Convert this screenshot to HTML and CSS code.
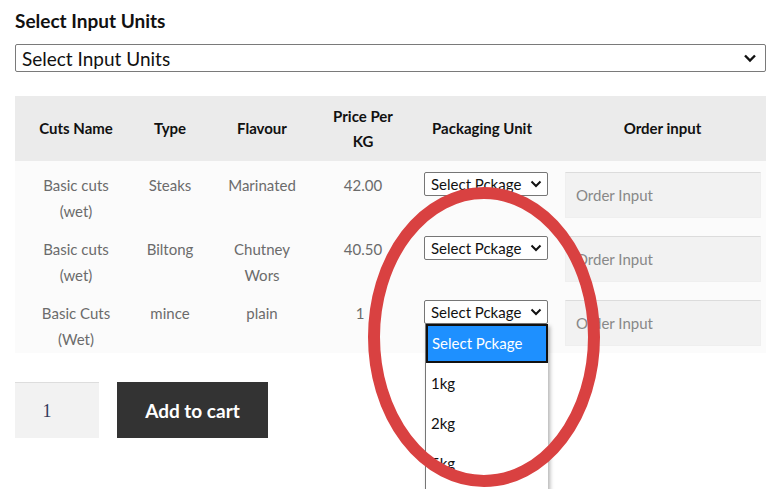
FILE: index.html
```html
<!DOCTYPE html>
<html>
<head>
<meta charset="utf-8">
<link rel="stylesheet" href="styles.css">
</head>
<body>
<div class="page">
  <h3 class="title">Select Input Units</h3>
  <div class="big-select">
    <span>Select Input Units</span>
    <svg class="chev" width="14" height="10" viewBox="0 0 14 10"><path d="M2 2.5 L7 7.5 L12 2.5" fill="none" stroke="#111" stroke-width="2.4"/></svg>
  </div>
  <table class="cuts">
    <colgroup>
      <col class="c1"><col class="c2"><col class="c3"><col class="c4"><col class="c5"><col>
    </colgroup>
    <thead>
      <tr><th>Cuts Name</th><th>Type</th><th>Flavour</th><th>Price Per<br>KG</th><th>Packaging Unit</th><th>Order input</th></tr>
    </thead>
    <tbody>
      <tr>
        <td>Basic cuts<br>(wet)</td><td>Steaks</td><td>Marinated</td><td>42.00</td>
        <td class="pk"><div class="sm-select">Select Pckage<svg width="12" height="8" viewBox="0 0 12 8"><path d="M1.5 1.5 L6 6 L10.5 1.5" fill="none" stroke="#111" stroke-width="2"/></svg></div></td>
        <td class="oi"><div class="order">Order Input</div></td>
      </tr>
      <tr>
        <td>Basic cuts<br>(wet)</td><td>Biltong</td><td>Chutney<br>Wors</td><td>40.50</td>
        <td class="pk"><div class="sm-select">Select Pckage<svg width="12" height="8" viewBox="0 0 12 8"><path d="M1.5 1.5 L6 6 L10.5 1.5" fill="none" stroke="#111" stroke-width="2"/></svg></div></td>
        <td class="oi"><div class="order">Order Input</div></td>
      </tr>
      <tr>
        <td>Basic Cuts<br>(Wet)</td><td>mince</td><td>plain</td><td class="p1">1</td>
        <td class="pk"><div class="sm-select open">Select Pckage<svg width="12" height="8" viewBox="0 0 12 8"><path d="M1.5 1.5 L6 6 L10.5 1.5" fill="none" stroke="#111" stroke-width="2"/></svg>
          <div class="popup">
            <div class="opt sel">Select Pckage</div>
            <div class="opt">1kg</div>
            <div class="opt">2kg</div>
            <div class="opt">5kg</div>
          </div></div></td>
        <td class="oi"><div class="order">Order Input</div></td>
      </tr>
    </tbody>
  </table>
  <div class="cart">
    <div class="qty">1</div>
    <button class="add">Add to cart</button>
  </div>
  <svg class="ring" width="250" height="320" viewBox="0 0 250 320"><ellipse cx="119" cy="155" rx="110" ry="144" fill="none" stroke="#d94141" stroke-width="12"/></svg>
</div>
</body>
</html>
```

FILE: styles.css
```css
html { margin: 0; padding: 0; overflow: hidden; background: #fff; }
body { margin: 0; padding: 0; font-family: "Source Sans Pro", Lato, "Noto Sans", sans-serif; }
.page { position: relative; padding: 8px 11px 0 15px; width: 751px; height: 481px; }
.title { margin: 0; font-size: 19px; font-weight: 700; color: #111; line-height: 26px; height: 28px; }
.big-select {
  margin-top: 8px; height: 28px; box-sizing: border-box;
  border: 1px solid #7a7a7a; border-radius: 2px;
  display: flex; align-items: center; justify-content: space-between;
  padding: 0 8px 0 6px; font-size: 19px; color: #111;
}
.cuts { margin-top: 24px; width: 751px; border-collapse: collapse; table-layout: fixed; }
.c1 { width: 122px; }
.c2 { width: 66px; }
.c3 { width: 118px; }
.c4 { width: 84px; }
.c5 { width: 154px; }
.cuts th {
  background: #ebebeb; font-size: 15px; font-weight: 700; color: #111;
  line-height: 25px; height: 65px; padding: 0 6px; box-sizing: border-box; text-align: center; vertical-align: middle;
}
.cuts td {
  background: #fbfbfb; font-size: 15px; color: #6b6b6b; line-height: 26px;
  padding: 11px 6px 0; vertical-align: top; text-align: center;
}
.cuts td.oi { padding-bottom: 7px; padding-right: 5px; }
.cuts td.p1 { padding-left: 0; padding-right: 6px; }
.cuts td.pk { text-align: left; padding-left: 19px; padding-right: 0; }
.sm-select {
  position: relative; width: 124px; height: 24px; box-sizing: border-box;
  border: 1px solid #767676; border-radius: 2px; background: #fff;
  display: flex; align-items: center; justify-content: space-between;
  padding: 0 5px 0 6px; font-size: 15px; color: #111; line-height: 22px;
}
.order {
  height: 46px; box-sizing: border-box; background: #f2f2f2;
  border: 1px solid #efefef; border-top-color: #dcdcdc;
  text-align: left; padding-left: 10px; line-height: 44px; color: #888; font-size: 15px;
}
.popup {
  position: absolute; left: 0; top: 23px; width: 122px; height: 170px;
  background: #fff; border-left: 1px solid #767676;
  box-shadow: 2px 2px 4px rgba(0,0,0,0.3); z-index: 2;
}
.opt { height: 40px; line-height: 40px; padding-left: 5px; font-size: 15px; color: #111; }
.opt.sel { height: 39px; line-height: 35px; background: #1e90ff; color: #fff; border: 2px solid #111; box-sizing: border-box; padding-left: 4px; }
.cart { display: flex; gap: 18px; margin-top: 29px; }
.qty {
  width: 84px; height: 56px; box-sizing: border-box; background: #f2f2f2;
  border-top: 1px solid #ddd; text-align: center; line-height: 56px;
  font-family: "Liberation Serif", serif; font-size: 18px; color: #333a5a; padding-right: 20px;
}
.add {
  width: 151px; height: 56px; border: 0; background: #333; color: #fff;
  font-family: inherit; font-size: 19px; font-weight: 700; padding: 0;
}
.ring { position: absolute; left: 365px; top: 182px; z-index: 3; pointer-events: none; }
```
